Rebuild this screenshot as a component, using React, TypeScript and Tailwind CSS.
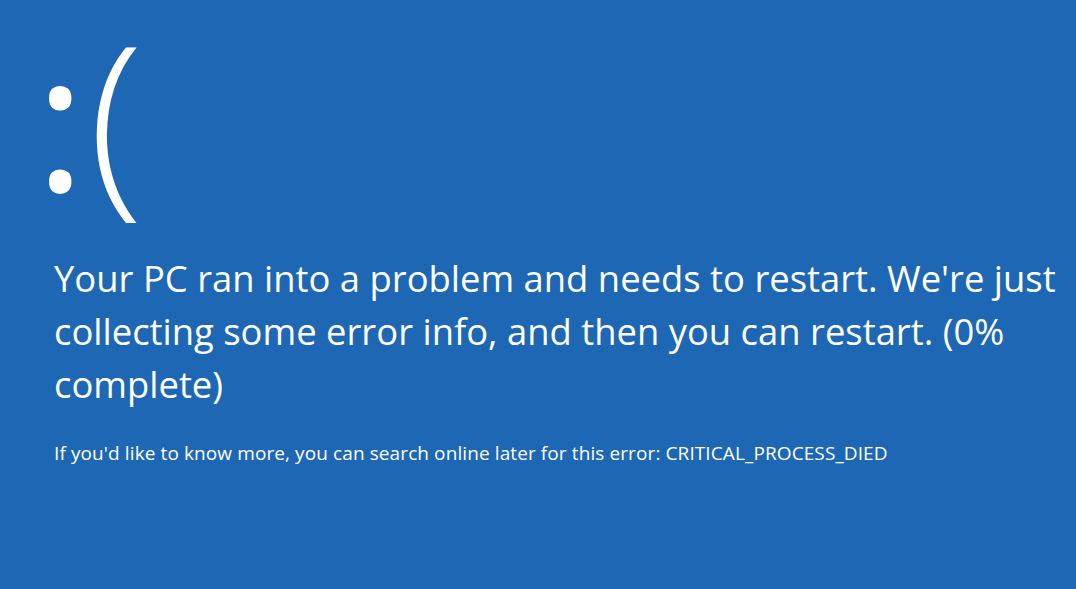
export default function App() {
  return (
    <div className="w-[1076px] h-[589px] overflow-hidden bg-[#1d67b4] text-white font-['Open_Sans',sans-serif]">
      <div className="pl-[35px] pt-[3px]">
        {/* sad face */}
        <div className="flex items-baseline">
          <span className="text-[192px] font-normal leading-[1.1]">:</span>
          <span className="text-[201px] font-light leading-[1.1] ml-[3px]">(</span>
        </div>
        <div className="pl-[19px]">
          <p className="mt-[28px] text-[36.4px] leading-[53px] w-[1020px]">
            Your PC ran into a problem and needs to restart. We're just collecting some error info, and then you can restart. (0% complete)
          </p>
          <p className="mt-[32px] text-[19px] leading-[20px] tracking-[0.1px]">
            If you'd like to know more, you can search online later for this error: CRITICAL_PROCESS_DIED
          </p>
        </div>
      </div>
    </div>
  );
}
